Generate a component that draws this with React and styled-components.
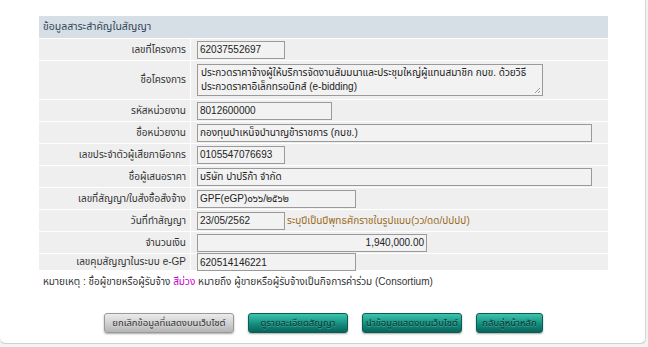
import React from "react";
import styled, { createGlobalStyle } from "styled-components";

const Global = createGlobalStyle`
  html, body { margin: 0; padding: 0; background: #f4f4f4; }
  body { font-family: "Liberation Sans", "Noto Sans Thai", sans-serif; font-size: 10px; color: #333; }
  * { box-sizing: border-box; }
`;

const Page = styled.div`
  width: 646px;
  height: 344px;
  background: #fff;
  border-right: 1px solid #d8d8d8;
  border-bottom: 1px solid #d0d0d0;
  border-bottom-right-radius: 6px;
  border-bottom-left-radius: 6px;
  box-shadow: 0 1px 2px rgba(0,0,0,0.08);
  padding: 16px 0 0 39px;
`;

const Grid = styled.div`
  width: 569px;
  display: grid;
  grid-template-columns: 151px 1fr;
  gap: 1px;
  background: #fff;
`;

const Header = styled.div`
  grid-column: 1 / -1;
  background: #d6dee6;
  height: 22px;
  display: flex;
  align-items: center;
  padding-left: 4px;
  color: #34465a;
  font-size: 10.5px;
`;

const Label = styled.div`
  background: #efefef;
  display: flex;
  align-items: center;
  justify-content: flex-end;
  padding-right: 4px;
  height: ${p => p.$h || 21}px;
  color: #333;
  white-space: nowrap;
`;

const Value = styled.div`
  background: #efefef;
  display: flex;
  align-items: center;
  gap: 2px;
  padding-left: 6px;
  height: ${p => p.$h || 21}px;
`;

const Field = styled.div`
  width: ${p => p.$w}px;
  height: 18px;
  border: 1px solid #9a9a9a;
  background: #f2f2f2;
  padding: 0 2px;
  display: flex;
  align-items: center;
  justify-content: ${p => (p.$right ? "flex-end" : "flex-start")};
  font-size: 10px;
  color: #222;
  white-space: nowrap;
  overflow: hidden;
`;

const Area = styled.div`
  position: relative;
  width: 346px;
  height: 32px;
  border: 1px solid #9a9a9a;
  background: #f2f2f2;
  padding: 1px 3px;
  font-size: 10px;
  line-height: 14px;
  color: #222;
  white-space: nowrap;
  overflow: hidden;
`;

const Grip = styled.svg`
  position: absolute;
  right: 1px;
  bottom: 1px;
`;

const Hint = styled.span`
  color: #9a6a1a;
  white-space: nowrap;
`;

const Note = styled.div`
  margin-top: 4px;
  padding-left: 4px;
  color: #333;
  white-space: nowrap;
`;

const Purple = styled.span`
  color: #cc00cc;
`;

const Buttons = styled.div`
  display: flex;
  gap: 14px;
  margin-top: 23px;
  padding-left: 65px;
`;

const Button = styled.div`
  width: ${p => p.$w}px;
  height: 20px;
  border-radius: 3px;
  display: flex;
  align-items: center;
  justify-content: center;
  font-size: 9.5px;
  white-space: nowrap;
  color: ${p => (p.$gray ? "#333" : "#0a3530")};
  background: ${p =>
    p.$gray
      ? "linear-gradient(#ececec, #b5b5b5)"
      : "linear-gradient(#3cc4ad, #10897a 60%, #0a6359)"};
  border: 1px solid ${p => (p.$gray ? "#9a9a9a" : "#0b5c52")};
  box-shadow: 0 1px 2px rgba(0,0,0,0.35);
  text-shadow: 0 1px 0 rgba(255,255,255,0.25);
`;

const rows = [
  { label: "เลขที่โครงการ", w: 88, v: "62037552697" },
  { label: "ชื่อโครงการ", area: true },
  { label: "รหัสหน่วยงาน", w: 135, v: "8012600000" },
  { label: "ชื่อหน่วยงาน", w: 395, v: "กองทุนบำเหน็จบำนาญข้าราชการ (กบข.)" },
  { label: "เลขประจำตัวผู้เสียภาษีอากร", w: 88, v: "0105547076693" },
  { label: "ชื่อผู้เสนอราคา", w: 395, v: "บริษัท ปาปริก้า จำกัด" },
  { label: "เลขที่สัญญา/ใบสั่งซื้อสั่งจ้าง", w: 159, v: "GPF(eGP)๐๖๖/๒๕๖๒" },
  { label: "วันที่ทำสัญญา", w: 88, v: "23/05/2562", hint: "ระบุปีเป็นปีพุทธศักราชในรูปแบบ(วว/ดด/ปปปป)" },
  { label: "จำนวนเงิน", w: 230, v: "1,940,000.00", right: true },
  { label: "เลขคุมสัญญาในระบบ e-GP", w: 159, v: "620514146221", h: 16 },
];

export default function App() {
  return (
    <>
      <Global />
      <Page>
        <Grid>
          <Header>ข้อมูลสาระสำคัญในสัญญา</Header>
          {rows.map(r => {
            const h = r.area ? 38 : r.h || 21;
            return (
              <React.Fragment key={r.label}>
                <Label $h={h}>{r.label}</Label>
                <Value $h={h}>
                  {r.area ? (
                    <Area>
                      ประกวดราคาจ้างผู้ให้บริการจัดงานสัมมนาและประชุมใหญ่ผู้แทนสมาชิก กบข. ด้วยวิธี
                      <br />
                      ประกวดราคาอิเล็กทรอนิกส์ (e-bidding)
                      <Grip width="8" height="8" viewBox="0 0 8 8">
                        <path d="M7 2 L2 7 M7 5 L5 7" stroke="#999" strokeWidth="1" />
                      </Grip>
                    </Area>
                  ) : (
                    <Field $w={r.w} $right={r.right}>{r.v}</Field>
                  )}
                  {r.hint && <Hint>{r.hint}</Hint>}
                </Value>
              </React.Fragment>
            );
          })}
        </Grid>
        <Note>
          หมายเหตุ : ชื่อผู้ขายหรือผู้รับจ้าง <Purple>สีม่วง</Purple> หมายถึง ผู้ขายหรือผู้รับจ้างเป็นกิจการค่าร่วม (Consortium)
        </Note>
        <Buttons>
          <Button $gray $w={130}>ยกเลิกข้อมูลที่แสดงบนเว็บไซต์</Button>
          <Button $w={100}>ดูรายละเอียดสัญญา</Button>
          <Button $w={100}>นำข้อมูลแสดงบนเว็บไซต์</Button>
          <Button $w={67}>กลับสู่หน้าหลัก</Button>
        </Buttons>
      </Page>
    </>
  );
}
